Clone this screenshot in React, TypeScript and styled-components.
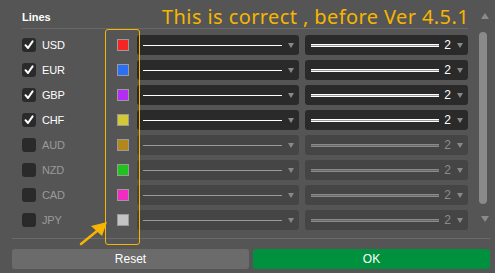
import styled, { createGlobalStyle } from "styled-components";

const GlobalStyle = createGlobalStyle`
  body {
    margin: 0;
    background: #555555;
    font-family: "Liberation Sans", Arial, sans-serif;
  }
`;

const Page = styled.div`
  position: relative;
  width: 495px;
  height: 273px;
  display: flex;
  flex-direction: column;
  background: #555555;
  overflow: hidden;
`;

const Top = styled.div`
  display: flex;
  height: 238px;
`;

const Main = styled.div`
  width: 446px;
  margin-left: 22px;
`;

const Header = styled.div`
  height: 28px;
  display: flex;
  align-items: flex-end;
  justify-content: space-between;
  border-bottom: 1px solid #686868;
`;

const SectionTitle = styled.span`
  color: #ffffff;
  font-weight: bold;
  font-size: 11px;
  margin-bottom: 5px;
`;

const Note = styled.span`
  color: #f7b500;
  font-family: "Noto Sans", "Open Sans", sans-serif;
  font-size: 20px;
  letter-spacing: 0.4px;
  line-height: 1;
  margin-bottom: 1px;
  margin-right: -1px;
  white-space: nowrap;
`;

const List = styled.div`
  display: flex;
  flex-direction: column;
  gap: 5px;
  padding-top: 6px;
`;

const Row = styled.div`
  display: flex;
  align-items: center;
  height: 20px;
`;

const Check = styled.div`
  width: 14px;
  height: 14px;
  border-radius: 3px;
  background: #2a2a2a;
  display: flex;
  align-items: center;
  justify-content: center;
  flex-shrink: 0;
`;

const Label = styled.span<{ $on: boolean }>`
  width: 75px;
  margin-left: 6px;
  font-size: 11px;
  letter-spacing: -0.2px;
  color: ${(p) => (p.$on ? "#ffffff" : "#9a9a9a")};
`;

const Swatch = styled.div<{ $color: string }>`
  width: 10px;
  height: 10px;
  border: 1px solid #9a9a9a;
  background: ${(p) => p.$color};
  margin-right: 8px;
  flex-shrink: 0;
`;

const Select = styled.div<{ $on: boolean; $w: number }>`
  width: ${(p) => p.$w}px;
  height: 20px;
  box-sizing: border-box;
  border-radius: 3px;
  background: ${(p) => (p.$on ? "#2a2a2a" : "#454545")};
  display: flex;
  align-items: center;
  padding: 0 5px 0 6px;
  & + & {
    margin-left: 6px;
  }
`;

const ThinLine = styled.div<{ $on: boolean }>`
  flex: 1;
  height: 1px;
  background: ${(p) => (p.$on ? "#ffffff" : "#9a9a9a")};
`;

const ThickLine = styled.div<{ $on: boolean }>`
  flex: 1;
  height: 1px;
  border-top: 1px solid ${(p) => (p.$on ? "#ffffff" : "#8a8a8a")};
  border-bottom: 1px solid ${(p) => (p.$on ? "#ffffff" : "#8a8a8a")};
  background: ${(p) => (p.$on ? "#9a9a9a" : "#6a6a6a")};
`;

const Num = styled.span<{ $on: boolean }>`
  font-size: 12px;
  margin-left: 5px;
  color: ${(p) => (p.$on ? "#ffffff" : "#8c8c8c")};
`;

const Caret = styled.span`
  width: 0;
  height: 0;
  border-left: 3px solid transparent;
  border-right: 3px solid transparent;
  border-top: 5px solid #888888;
  margin-left: 6px;
`;

const Scroll = styled.div`
  width: 15px;
  margin-left: 9px;
  display: flex;
  flex-direction: column;
  align-items: center;
`;

const Arrow = styled.span<{ $up?: boolean }>`
  width: 0;
  height: 0;
  border-left: 4px solid transparent;
  border-right: 4px solid transparent;
  ${(p) =>
    p.$up
      ? "border-bottom: 6px solid #8a8a8a; margin-top: 13px;"
      : "border-top: 6px solid #8a8a8a; margin-top: 12px;"}
`;

const Thumb = styled.div`
  width: 8px;
  height: 172px;
  margin-top: 13px;
  margin-right: 4px;
  border-radius: 4px;
  background: #8a8a8a;
`;

const Footer = styled.div`
  margin: 0 5px 0 12px;
  border-top: 1px solid #6a6a6a;
  padding-top: 10px;
  display: flex;
  gap: 4px;
`;

const Button = styled.button<{ $primary?: boolean }>`
  flex: 1;
  height: 20px;
  border: none;
  border-radius: 3px;
  background: ${(p) => (p.$primary ? "#00913f" : "#6b6b6b")};
  color: #ffffff;
  font-family: "Liberation Sans", Arial, sans-serif;
  font-size: 12px;
  padding: 0;
`;

const Highlight = styled.div`
  position: absolute;
  left: 105px;
  top: 29px;
  width: 33px;
  height: 214px;
  border: 1px solid #f7b500;
  border-radius: 3px;
`;

const Pointer = styled.svg`
  position: absolute;
  left: 76px;
  top: 218px;
`;

const rows = [
  { code: "USD", color: "#f52525", on: true },
  { code: "EUR", color: "#2b6ff5", on: true },
  { code: "GBP", color: "#b52cf2", on: true },
  { code: "CHF", color: "#d2c935", on: true },
  { code: "AUD", color: "#b3871c", on: false },
  { code: "NZD", color: "#1ec41e", on: false },
  { code: "CAD", color: "#f22cc2", on: false },
  { code: "JPY", color: "#c4c4c4", on: false },
];

export default function App() {
  return (
    <Page>
      <GlobalStyle />
      <Top>
        <Main>
          <Header>
            <SectionTitle>Lines</SectionTitle>
            <Note>This is correct , before Ver 4.5.1</Note>
          </Header>
          <List>
            {rows.map((r) => (
              <Row key={r.code}>
                <Check>
                  {r.on && (
                    <svg width="10" height="10" viewBox="0 0 10 10">
                      <path
                        d="M1.5 5.2 L4 8 L8.6 1.4"
                        fill="none"
                        stroke="#ffffff"
                        strokeWidth="2"
                        strokeLinecap="round"
                        strokeLinejoin="round"
                      />
                    </svg>
                  )}
                </Check>
                <Label $on={r.on}>{r.code}</Label>
                <Swatch $color={r.color} />
                <Select $on={r.on} $w={162}>
                  <ThinLine $on={r.on} />
                  <Caret />
                </Select>
                <Select $on={r.on} $w={163}>
                  <ThickLine $on={r.on} />
                  <Num $on={r.on}>2</Num>
                  <Caret />
                </Select>
              </Row>
            ))}
          </List>
        </Main>
        <Scroll>
          <Arrow $up />
          <Thumb />
          <Arrow />
        </Scroll>
      </Top>
      <Footer>
        <Button>Reset</Button>
        <Button $primary>OK</Button>
      </Footer>
      <Highlight />
      <Pointer width="34" height="30" viewBox="0 0 34 30">
        <path d="M5 26 L21 13" stroke="#f7b500" strokeWidth="2.5" strokeLinecap="round" />
        <path d="M31 4 L15 8 L26 18 Z" fill="#f7b500" />
      </Pointer>
    </Page>
  );
}
